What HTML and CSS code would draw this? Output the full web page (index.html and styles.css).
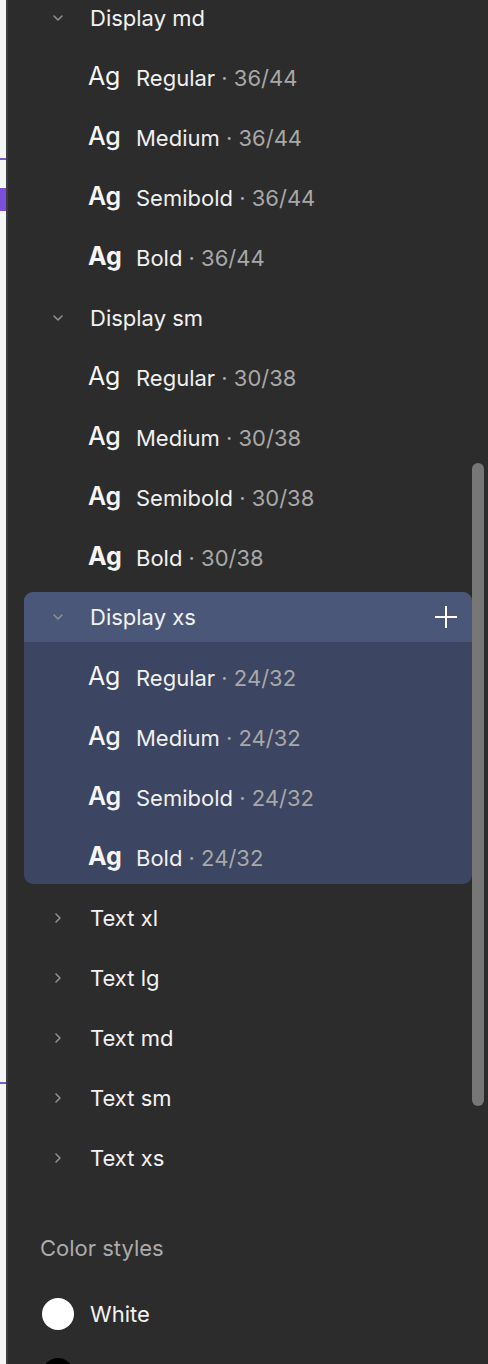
FILE: index.html
```html
<!DOCTYPE html>
<html>
<head>
<meta charset="utf-8">
<link rel="stylesheet" href="styles.css">
</head>
<body>
<div class="app">
  <div class="canvas-edge">
    <div class="mark-line first"></div>
    <div class="mark-block"></div>
    <div class="mark-line last"></div>
  </div>
  <div class="divider"></div>
  <div class="panel">
    <div class="content">
      <div class="row head">
        <svg class="chev" viewBox="0 0 16 16"><path d="M4 6 L8 10 L12 6"/></svg>
        <span class="name">Display md</span>
      </div>
      <div class="row item"><span class="ag w4">Ag</span><span class="label">Regular <span class="meta">· 36/44</span></span></div>
      <div class="row item"><span class="ag w5">Ag</span><span class="label">Medium <span class="meta">· 36/44</span></span></div>
      <div class="row item"><span class="ag w6">Ag</span><span class="label">Semibold <span class="meta">· 36/44</span></span></div>
      <div class="row item"><span class="ag w7">Ag</span><span class="label">Bold <span class="meta">· 36/44</span></span></div>

      <div class="row head">
        <svg class="chev" viewBox="0 0 16 16"><path d="M4 6 L8 10 L12 6"/></svg>
        <span class="name">Display sm</span>
      </div>
      <div class="row item"><span class="ag w4">Ag</span><span class="label">Regular <span class="meta">· 30/38</span></span></div>
      <div class="row item"><span class="ag w5">Ag</span><span class="label">Medium <span class="meta">· 30/38</span></span></div>
      <div class="row item"><span class="ag w6">Ag</span><span class="label">Semibold <span class="meta">· 30/38</span></span></div>
      <div class="row item"><span class="ag w7">Ag</span><span class="label">Bold <span class="meta">· 30/38</span></span></div>

      <div class="group">
        <div class="group-head">
          <svg class="chev" viewBox="0 0 16 16"><path d="M4 6 L8 10 L12 6"/></svg>
          <span class="name">Display xs</span>
          <svg class="plus" viewBox="0 0 24 24"><path d="M12 1 V23 M1 12 H23"/></svg>
        </div>
        <div class="group-body">
          <div class="row item"><span class="ag w4">Ag</span><span class="label">Regular <span class="meta">· 24/32</span></span></div>
          <div class="row item"><span class="ag w5">Ag</span><span class="label">Medium <span class="meta">· 24/32</span></span></div>
          <div class="row item"><span class="ag w6">Ag</span><span class="label">Semibold <span class="meta">· 24/32</span></span></div>
          <div class="row item last"><span class="ag w7">Ag</span><span class="label">Bold <span class="meta">· 24/32</span></span></div>
        </div>
      </div>

      <div class="row head">
        <svg class="chev" viewBox="0 0 16 16"><path d="M6 4 L10 8 L6 12"/></svg>
        <span class="name">Text xl</span>
      </div>
      <div class="row head">
        <svg class="chev" viewBox="0 0 16 16"><path d="M6 4 L10 8 L6 12"/></svg>
        <span class="name">Text lg</span>
      </div>
      <div class="row head">
        <svg class="chev" viewBox="0 0 16 16"><path d="M6 4 L10 8 L6 12"/></svg>
        <span class="name">Text md</span>
      </div>
      <div class="row head">
        <svg class="chev" viewBox="0 0 16 16"><path d="M6 4 L10 8 L6 12"/></svg>
        <span class="name">Text sm</span>
      </div>
      <div class="row head">
        <svg class="chev" viewBox="0 0 16 16"><path d="M6 4 L10 8 L6 12"/></svg>
        <span class="name">Text xs</span>
      </div>

      <div class="section-title">Color styles</div>
      <div class="row color"><span class="swatch white"></span><span class="name">White</span></div>
      <div class="row color"><span class="swatch black"></span></div>
    </div>
    <div class="track"><div class="thumb"></div></div>
  </div>
</div>
</body>
</html>
```
FILE: styles.css
```css
* { box-sizing: border-box; }
html, body { margin: 0; padding: 0; }
body {
  width: 488px;
  height: 1364px;
  overflow: hidden;
  background: #2c2c2c;
  font-family: Inter, "Noto Sans", sans-serif;
  color: #f2f2f2;
}
.app {
  display: flex;
  height: 1364px;
}
.canvas-edge {
  width: 6px;
  flex: none;
  background: #f5f5f5;
  display: flex;
  flex-direction: column;
}
.mark-line {
  height: 2px;
  background: #7b56d8;
}
.mark-line.first { margin-top: 158px; }
.mark-block {
  margin-top: 28px;
  height: 23px;
  background: #7b4fdb;
}
.mark-line.last { margin-top: 871px; }
.divider {
  width: 2px;
  flex: none;
  background: #3d3d3d;
}
.panel {
  flex: 1;
  display: flex;
  background: #2c2c2c;
}
.content {
  flex: 1;
  margin-top: -12px;
  display: flex;
  flex-direction: column;
}
.row {
  height: 60px;
  flex: none;
  display: flex;
  align-items: center;
}
.head { padding-left: 42px; }
.chev {
  width: 16px;
  height: 16px;
  flex: none;
  fill: none;
  stroke: #8f8f8f;
  stroke-width: 1.6;
  stroke-linecap: round;
  stroke-linejoin: round;
}
.name {
  margin-left: 24px;
  font-size: 22px;
  color: #f2f2f2;
}
.item { padding-left: 80px; }
.ag {
  width: 48px;
  flex: none;
  font-size: 25px;
  color: #f5f5f5;
  letter-spacing: -0.2px;
  position: relative;
  top: -2px;
}
.w4 { font-weight: 400; }
.w5 { font-weight: 500; }
.w6 { font-weight: 600; }
.w7 { font-weight: 700; }
.label {
  font-size: 22px;
  color: #f0f0f0;
  white-space: nowrap;
}
.meta { color: #a8a8a8; }
.group {
  margin: 4px 0 4px 16px;
  border-radius: 9px;
  overflow: hidden;
  background: #3c4561;
  flex: none;
}
.group-head {
  height: 50px;
  display: flex;
  align-items: center;
  padding-left: 26px;
  padding-right: 14px;
  background: #4b5778;
}
.group-head .name { flex: 1; }
.plus {
  width: 24px;
  height: 24px;
  fill: none;
  stroke: #ffffff;
  stroke-width: 2;
}
.group-body { padding-top: 6px; }
.group-body .item { padding-left: 64px; }
.group-body .item.last { margin-bottom: -4px; }
.section-title {
  margin-top: 40px;
  height: 40px;
  line-height: 40px;
  padding-left: 32px;
  font-size: 22px;
  color: #ababab;
  flex: none;
}
.color { padding-left: 34px; margin-top: 16px; }
.color + .color { margin-top: 0; }
.color .name { margin-left: 16px; }
.swatch {
  width: 32px;
  height: 32px;
  border-radius: 50%;
  flex: none;
}
.swatch.white { background: #ffffff; }
.swatch.black { background: #000000; }
.track {
  width: 16px;
  flex: none;
  padding-right: 4px;
}
.thumb {
  margin-top: 463px;
  height: 643px;
  width: 12px;
  border-radius: 6px;
  background: #777777;
}
```
